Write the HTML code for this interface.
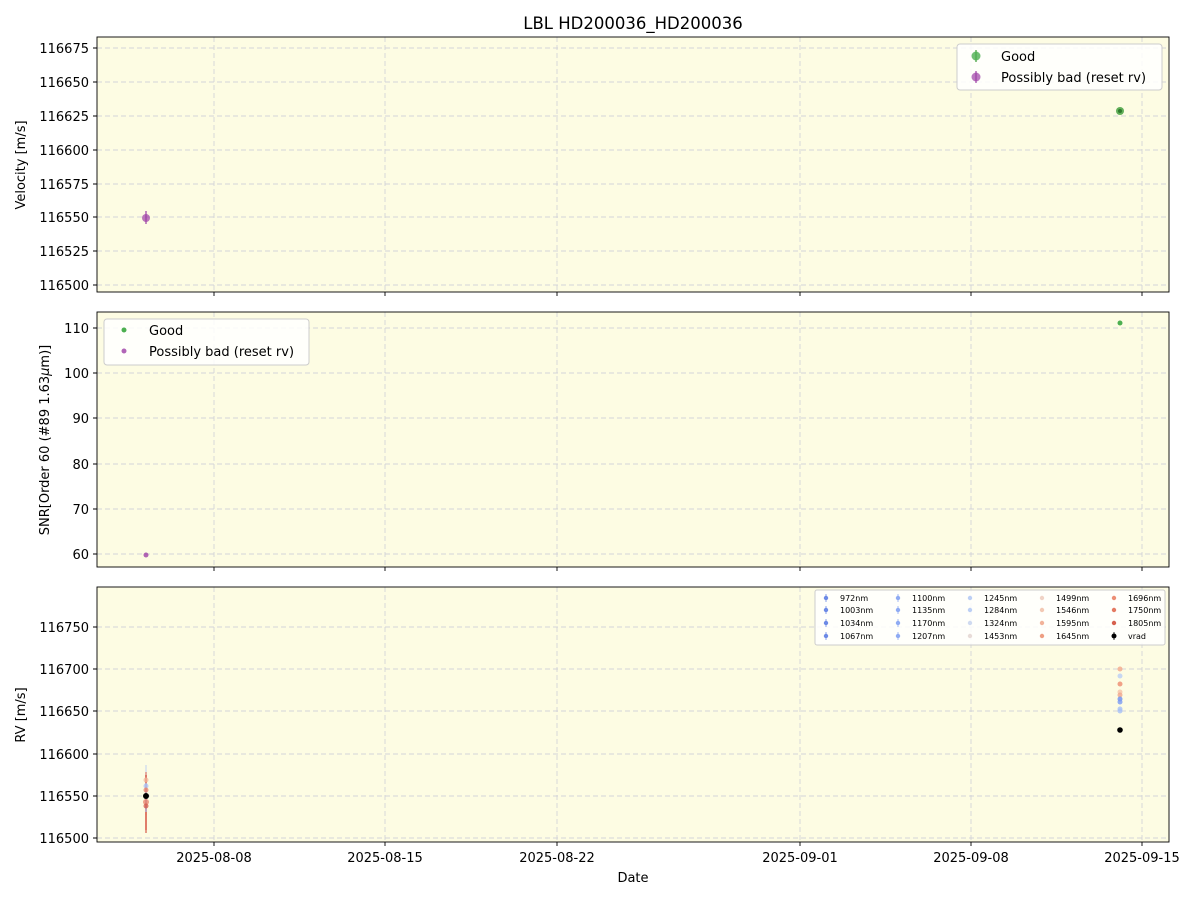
<!DOCTYPE html>
<html><head><meta charset="utf-8"><style>
body{margin:0;background:#fff}
svg{display:block;font-family:"DejaVu Sans","Liberation Sans",sans-serif}
</style></head><body>
<svg width="1200" height="900" xmlns="http://www.w3.org/2000/svg">
<rect width="1200" height="900" fill="#fff"/>
<text x="633" y="29" font-size="16.5" text-anchor="middle">LBL HD200036_HD200036</text>

<g fill="#fdfce3" stroke="none">
<rect x="97" y="37" width="1072" height="255"/>
<rect x="97" y="312" width="1072" height="255"/>
<rect x="97" y="587" width="1072" height="255"/>
</g>

<g stroke="#d3d3d8" stroke-dasharray="5,3" stroke-width="0.9">
<path d="M214 37V292M385 37V292M557 37V292M800 37V292M971 37V292M1142 37V292"/>
<path d="M214 312V567M385 312V567M557 312V567M800 312V567M971 312V567M1142 312V567"/>
<path d="M214 587V842M385 587V842M557 587V842M800 587V842M971 587V842M1142 587V842"/>
<path d="M97 48H1169M97 82H1169M97 116H1169M97 150H1169M97 184H1169M97 217H1169M97 251H1169M97 285H1169"/>
<path d="M97 328H1169M97 373H1169M97 418H1169M97 464H1169M97 509H1169M97 554H1169"/>
<path d="M97 627H1169M97 669H1169M97 711H1169M97 754H1169M97 796H1169M97 838H1169"/>
</g>

<g fill="none" stroke="#000" stroke-width="0.9">
<rect x="97" y="37" width="1072" height="255"/>
<rect x="97" y="312" width="1072" height="255"/>
<rect x="97" y="587" width="1072" height="255"/>
</g>

<g stroke="#000" stroke-width="0.9">
<path d="M214 292v4M385 292v4M557 292v4M800 292v4M971 292v4M1142 292v4"/>
<path d="M214 567v4M385 567v4M557 567v4M800 567v4M971 567v4M1142 567v4"/>
<path d="M214 842v4M385 842v4M557 842v4M800 842v4M971 842v4M1142 842v4"/>
<path d="M97 48h-4M97 82h-4M97 116h-4M97 150h-4M97 184h-4M97 217h-4M97 251h-4M97 285h-4"/>
<path d="M97 328h-4M97 373h-4M97 418h-4M97 464h-4M97 509h-4M97 554h-4"/>
<path d="M97 627h-4M97 669h-4M97 711h-4M97 754h-4M97 796h-4M97 838h-4"/>
</g>

<g font-size="13" text-anchor="end">
<text x="89" y="53">116675</text><text x="89" y="87">116650</text><text x="89" y="121">116625</text><text x="89" y="155">116600</text><text x="89" y="189">116575</text><text x="89" y="222">116550</text><text x="89" y="256">116525</text><text x="89" y="290">116500</text>
<text x="89" y="333">110</text><text x="89" y="378">100</text><text x="89" y="423">90</text><text x="89" y="469">80</text><text x="89" y="514">70</text><text x="89" y="559">60</text>
<text x="89" y="632">116750</text><text x="89" y="674">116700</text><text x="89" y="716">116650</text><text x="89" y="759">116600</text><text x="89" y="801">116550</text><text x="89" y="843">116500</text>
</g>
<g font-size="13" text-anchor="middle">
<text x="214" y="862">2025-08-08</text><text x="385" y="862">2025-08-15</text><text x="557" y="862">2025-08-22</text><text x="800" y="862">2025-09-01</text><text x="971" y="862">2025-09-08</text><text x="1142" y="862">2025-09-15</text>
<text x="633" y="882">Date</text>
</g>
<g font-size="13" text-anchor="middle">
<text transform="translate(25 165) rotate(-90)">Velocity [m/s]</text>
<text transform="translate(49 440) rotate(-90)">SNR[Order 60 (#89 1.63<tspan font-style="italic">μ</tspan>m)]</text>
<text transform="translate(25 715) rotate(-90)">RV [m/s]</text>
</g>

<g stroke="#9d3fa6" stroke-width="1.2"><path d="M146 211V224"/></g>
<circle cx="146" cy="218" r="4" fill="#9d3fa6" fill-opacity="0.7"/>
<circle cx="1120" cy="111" r="4" fill="#3b9b37" fill-opacity="0.8"/>
<circle cx="1120" cy="111" r="2" fill="#2e7a2b"/>

<rect x="957" y="44" width="205" height="46" rx="3" fill="#fff" fill-opacity="0.85" stroke="#ccc"/>
<g stroke-width="1.2"><path d="M976 50V62" stroke="#3b9b37"/><path d="M976 71V83" stroke="#9d3fa6"/></g>
<circle cx="976" cy="56" r="4.5" fill="#4caf50" fill-opacity="0.8"/>
<circle cx="976" cy="77" r="4.5" fill="#9d3fa6" fill-opacity="0.7"/>
<text x="1001" y="61" font-size="13">Good</text>
<text x="1001" y="82" font-size="13">Possibly bad (reset rv)</text>

<circle cx="1120" cy="323" r="2.5" fill="#4caf50"/>
<circle cx="146" cy="555" r="2.5" fill="#9d3fa6" fill-opacity="0.8"/>
<rect x="104" y="319" width="205" height="46" rx="3" fill="#fff" fill-opacity="0.85" stroke="#ccc"/>
<circle cx="124" cy="330" r="2.5" fill="#4caf50"/>
<circle cx="124" cy="351" r="2.5" fill="#9d3fa6" fill-opacity="0.8"/>
<text x="149" y="335" font-size="13">Good</text>
<text x="149" y="356" font-size="13">Possibly bad (reset rv)</text>

<g stroke-width="2" stroke-opacity="0.6">
<path d="M146 765V805" stroke="#c9d7ef"/>
<path d="M146 772V830" stroke="#e8806a"/>
<path d="M146 778V815" stroke="#f0a58c"/>
<path d="M146 775V833" stroke="#d65a4a"/>
<path d="M146 783V812" stroke="#a8c0f5"/>
</g>
<g fill-opacity="0.75">
<circle cx="146" cy="780" r="2.5" fill="#f3b89c"/>
<circle cx="146" cy="786" r="2.5" fill="#a8c0f5"/>
<circle cx="146" cy="790" r="2.5" fill="#e8806a"/>
<circle cx="146" cy="802" r="3" fill="#e8806a"/>
<circle cx="146" cy="806" r="2.5" fill="#d65a4a"/>
</g>
<circle cx="146" cy="796" r="3" fill="#000"/>
<g fill-opacity="0.8">
<circle cx="1120" cy="669" r="2.5" fill="#f3a68a"/>
<circle cx="1120" cy="676" r="2.5" fill="#b9cdf5"/>
<circle cx="1120" cy="684" r="2.5" fill="#ee8a6e"/>
<circle cx="1120" cy="692" r="2.5" fill="#f6c2a8"/>
<circle cx="1120" cy="695" r="2.5" fill="#f0a58c"/>
<circle cx="1120" cy="699" r="2.5" fill="#6d8ff0"/>
<circle cx="1120" cy="702" r="2.5" fill="#7b9af2"/>
<circle cx="1120" cy="709" r="2.5" fill="#a8c0f5"/>
<circle cx="1120" cy="711" r="2.5" fill="#a8c0f5"/>
</g>
<circle cx="1120" cy="730" r="2.8" fill="#000"/>

<rect x="815" y="590" width="350" height="55" rx="2" fill="#fff" fill-opacity="0.85" stroke="#ccc"/>
<g font-size="8">
<g fill="#6d8ae6"><circle cx="826" cy="598" r="2.2"/><circle cx="826" cy="610" r="2.2"/><circle cx="826" cy="623" r="2.2"/><circle cx="826" cy="636" r="2.2"/></g>
<g fill="#8fabf3"><circle cx="898" cy="598" r="2.2"/><circle cx="898" cy="610" r="2.2"/><circle cx="898" cy="623" r="2.2"/><circle cx="898" cy="636" r="2.2"/></g>
<g fill="#bccff5"><circle cx="970" cy="598" r="2.2"/><circle cx="970" cy="610" r="2.2"/><circle cx="970" cy="623" r="2.2" fill="#cfdaf0"/><circle cx="970" cy="636" r="2.2" fill="#e8dcd8"/></g>
<g fill="#f3c9b4"><circle cx="1042" cy="598" r="2.2" fill="#f0d3c6"/><circle cx="1042" cy="610" r="2.2"/><circle cx="1042" cy="623" r="2.2" fill="#f2b39a"/><circle cx="1042" cy="636" r="2.2" fill="#ee9e82"/></g>
<g fill="#ec8e74"><circle cx="1114" cy="598" r="2.2"/><circle cx="1114" cy="610" r="2.2" fill="#e47a62"/><circle cx="1114" cy="623" r="2.2" fill="#d6604e"/><circle cx="1114" cy="636" r="2.5" fill="#000"/></g>
<g stroke-width="0.8"><path d="M826 594v8M826 606v8M826 619v8M826 632v8" stroke="#6d8ae6"/><path d="M898 594v8M898 606v8M898 619v8M898 632v8" stroke="#8fabf3"/><path d="M1114 632v8" stroke="#000"/></g>
<text x="840" y="601">972nm</text><text x="840" y="613">1003nm</text><text x="840" y="626">1034nm</text><text x="840" y="639">1067nm</text>
<text x="912" y="601">1100nm</text><text x="912" y="613">1135nm</text><text x="912" y="626">1170nm</text><text x="912" y="639">1207nm</text>
<text x="984" y="601">1245nm</text><text x="984" y="613">1284nm</text><text x="984" y="626">1324nm</text><text x="984" y="639">1453nm</text>
<text x="1056" y="601">1499nm</text><text x="1056" y="613">1546nm</text><text x="1056" y="626">1595nm</text><text x="1056" y="639">1645nm</text>
<text x="1128" y="601">1696nm</text><text x="1128" y="613">1750nm</text><text x="1128" y="626">1805nm</text><text x="1128" y="639">vrad</text>
</g>
</svg>
</body></html>
